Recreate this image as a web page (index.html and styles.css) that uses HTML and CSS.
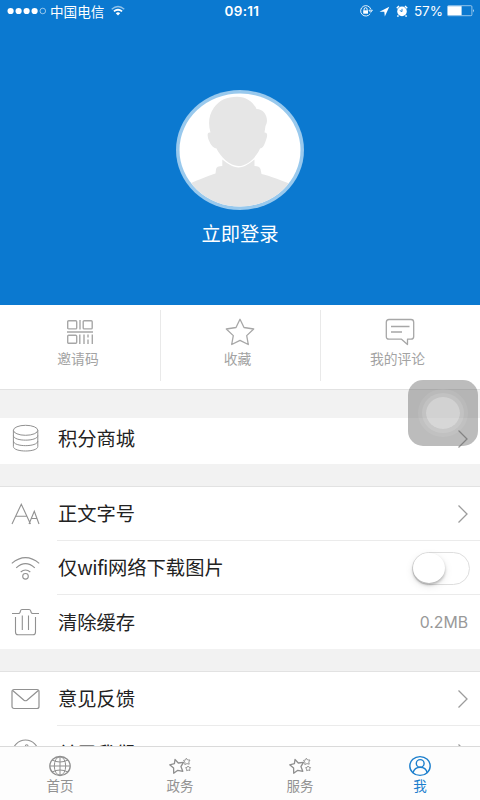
FILE: index.html
```html
<!DOCTYPE html>
<html lang="zh-CN">
<head>
<meta charset="utf-8">
<title>我</title>
<link rel="stylesheet" href="styles.css">
</head>
<body>
<div class="app">
  <header class="hero">
    <div class="status">
      <div class="status-left">
        <svg width="40" height="10" viewBox="0 0 40 10"><g fill="#fff"><circle cx="3.6" cy="5" r="3.1"/><circle cx="11.6" cy="5" r="3.1"/><circle cx="19.6" cy="5" r="3.1"/><circle cx="27.6" cy="5" r="3.1"/></g><circle cx="35.8" cy="5" r="2.8" fill="none" stroke="#fff" stroke-width=".7" opacity=".8"/></svg>
        <span class="carrier">中国电信</span>
        <svg class="signal" width="14" height="12" viewBox="0 0 14 12" fill="none" stroke="#fff"><path d="M.7 4.2Q7-1.2 13.3 4.2" stroke-width="1.3" opacity=".55"/><path d="M2.9 6.4Q7 3.1 11.1 6.4" stroke-width="1.8"/><path d="M4.8 8.3Q7 6.4 9.2 8.3L7 10.6Z" fill="#fff" stroke="none"/></svg>
      </div>
      <div class="clock">09:11</div>
      <div class="status-right">
        <svg width="14" height="12" viewBox="0 0 14 12" fill="none" stroke="#fff"><path d="M11.8 4.2A5.2 5.2 0 1 0 11.2 8.7M9.900 5.200h3.500L11.700 7.300Z" stroke-width=".9"/><path d="M5.100 5.500V4.200a1.500 1.500 0 0 1 3 0v1.300"/><rect x="4.200" y="5.300" width="4.800" height="3.400" fill="#fff" stroke="none"/></svg>
        <svg width="11" height="11" viewBox="0 0 11 11"><path d="M.5 5.700 10.300.7 5.800 10.400 5.300 5.800Z" fill="#fff"/></svg>
        <svg width="12" height="12" viewBox="0 0 12 12"><circle cx="6" cy="6.400" r="4.800" fill="#fff"/><path d="M.8 3.200 3 1M11.200 3.200 9 1M2.500 10.500 1.400 11.600M9.500 10.500l1.100 1.100" stroke="#fff" stroke-width="1.500"/><path d="M6 3.800v2.800L3.800 5.500" fill="none" stroke="#0b79d0" stroke-width=".9"/></svg>
        <span class="percent">57%</span>
        <svg width="28" height="12" viewBox="0 0 28 12"><rect x=".5" y=".7" width="24.400" height="10" rx="1" fill="none" stroke="#fff" stroke-width=".8" opacity=".7"/><rect x="1" y="1.200" width="13.600" height="9" fill="#fff"/><path d="M26 4q1.500 1.700 0 3.400Z" fill="#fff"/></svg>
      </div>
    </div>
    <svg class="avatar" width="128" height="120" viewBox="0 0 128 120">
      <defs><clipPath id="face"><ellipse cx="64" cy="60" rx="60.500" ry="56.500"/></clipPath></defs>
      <ellipse cx="64" cy="60" rx="64" ry="60" fill="#99c9ed"/>
      <ellipse cx="64" cy="60" rx="60.500" ry="56.500" fill="#fff"/>
      <g clip-path="url(#face)" fill="#e6e6e6">
        <path d="M46.300 69.500V76q-5.800 0-6.300 3.300L39.500 83.500Q28 87 4 98V120H124V98Q97 86.500 85.500 84L84.500 79Q83.500 76 78.500 76V69.500Q69 77.500 62.500 77.500T46.300 69.500Z"/>
        <path d="M61 6.700C70 6.700 77.500 12 80.500 19C89 19 93.500 29 89.500 36L88.500 42.500C92 42.500 91.500 46 90 50C88.500 55 87 58 84 58.500C80.500 67 71.500 76 62.500 76C54 76 44.500 67 40.500 58.500C36 58 34 53 32.300 49C31 44 31.500 42 34.500 42.500C32 34 32.500 25 38 17.500C43.500 10 51 6.700 61 6.700Z"/>
      </g>
    </svg>
    <div class="login">立即登录</div>
  </header>

  <nav class="quick">
    <div class="quick-item">
      <svg width="28" height="26" viewBox="0 0 28 26" fill="none" stroke="#a7a7a7" stroke-width="1.400"><rect x="1.700" y="1.700" width="9" height="8.200" rx="1"/><rect x="17.200" y="1.700" width="9" height="8.200" rx="1"/><rect x="1.700" y="16.200" width="9" height="8" rx="1"/><path d="M14 1v9.500M1 13h26M13.800 15.500V25M18 15.500V25M22 15.500v3M22 20.500V25M26.300 15.500V25"/></svg>
      <span>邀请码</span>
    </div>
    <div class="quick-item">
      <svg width="30" height="28" viewBox="0 0 30 28" fill="none" stroke="#a7a7a7" stroke-width="1.300" stroke-linejoin="round"><path d="M15 1.300 19 9.500 28.700 11 21.700 17.600 23.300 26.500 15 22.300 6.700 26.500 8.300 17.600 1.300 11 11 9.500Z"/></svg>
      <span>收藏</span>
    </div>
    <div class="quick-item">
      <svg width="30" height="28" viewBox="0 0 30 28" fill="none" stroke="#a7a7a7" stroke-width="1.300" stroke-linejoin="round"><path d="M4 1.500H26Q28.700 1.500 28.700 4.200V18.500Q28.700 21.200 26 21.200H22.500V26.500L16.500 21.200H4Q1.300 21.200 1.300 18.500V4.200Q1.300 1.500 4 1.500ZM6 8.500H24.500M6 14H17"/></svg>
      <span>我的评论</span>
    </div>
  </nav>

  <main class="list">
    <section class="group group-shop">
      <div class="row">
        <svg class="icon" width="30" height="30" viewBox="0 0 30 30" fill="none" stroke="#919191" stroke-width="1"><ellipse cx="15.600" cy="7.300" rx="12.200" ry="5"/><path d="M3.400 7.300V23.500C3.400 29.500 27.800 29.500 27.800 23.500V7.300M3.400 12.500C3.400 18.700 27.800 18.700 27.800 12.500M3.400 18C3.400 24.200 27.800 24.200 27.800 18"/></svg>
        <div class="row-body"><span class="label">积分商城</span><svg class="chevron" width="12" height="20" viewBox="0 0 12 20"><path d="M1.500 1.500 10 10 1.500 18.500"/></svg></div>
      </div>
    </section>

    <section class="group">
      <div class="row">
        <svg class="icon" width="30" height="30" viewBox="0 0 30 30" fill="none" stroke="#919191" stroke-width="1.100"><path d="M2 25 11.300 5.200 20.500 25M5.800 17.200H16.800M19 25 24.300 12.300 29 25M21.300 19.500H27"/></svg>
        <div class="row-body"><span class="label">正文字号</span><svg class="chevron" width="12" height="20" viewBox="0 0 12 20"><path d="M1.500 1.500 10 10 1.500 18.500"/></svg></div>
      </div>
      <div class="row">
        <svg class="icon" width="30" height="30" viewBox="0 0 30 30" fill="none" stroke="#919191" stroke-width="1.100"><path d="M1.800 10.300Q15.500-1 29.200 10.300M6.200 14.800Q15.500 6.300 24.800 14.800M10.700 19Q15.500 15 20.300 19"/><circle cx="15.500" cy="23.300" r="2.800"/></svg>
        <div class="row-body"><span class="label">仅<span class="latin">wifi</span>网络下载图片</span><div class="switch"><i></i></div></div>
      </div>
      <div class="row">
        <svg class="icon" width="30" height="30" viewBox="0 0 30 30" fill="none" stroke="#919191" stroke-width="1.100" stroke-linejoin="round"><path d="M2 6.500H8.500Q10 6.500 10.500 3.800 10.800 2.500 12 2.500H19Q20.300 2.500 20.700 3.800 21.200 6.500 22.700 6.500H29M5.500 10V25Q5.500 27.800 8 27.800H23Q25.500 27.800 25.500 25V10M12.300 8.500V23M18.500 8.500V23"/></svg>
        <div class="row-body"><span class="label">清除缓存</span><span class="value">0.2MB</span></div>
      </div>
    </section>

    <section class="group">
      <div class="row">
        <svg class="icon" width="30" height="30" viewBox="0 0 30 30" fill="none" stroke="#919191" stroke-width="1.200"><rect x="2" y="5.500" width="27" height="19" rx="2"/><path d="M2.700 6.500 14 16.200Q15.500 17.300 17 16.200L28.300 6.500"/></svg>
        <div class="row-body"><span class="label">意见反馈</span><svg class="chevron" width="12" height="20" viewBox="0 0 12 20"><path d="M1.500 1.500 10 10 1.500 18.500"/></svg></div>
      </div>
      <div class="row">
        <svg class="icon" width="30" height="30" viewBox="0 0 30 30" fill="none" stroke="#919191" stroke-width="1.100"><circle cx="15.500" cy="15" r="13"/><circle cx="16.700" cy="8" r="1.300"/><path d="M13 13h3l-2 9h3"/></svg>
        <div class="row-body"><span class="label">关于我们</span><svg class="chevron" width="12" height="20" viewBox="0 0 12 20"><path d="M1.500 1.500 10 10 1.500 18.500"/></svg></div>
      </div>
    </section>
  </main>

  <footer class="tabs">
    <div class="tab">
      <svg width="24" height="22" viewBox="0 0 24 22" fill="none" stroke="#8f8f8f" stroke-width="1"><ellipse cx="12" cy="11" rx="10.200" ry="9.500" stroke-width="1.300"/><ellipse cx="12" cy="11" rx="5.700" ry="9.300"/><path d="M12 1.500V20.500M2 11H22M4 5Q12 9 20 5M4 17Q12 13 20 17"/></svg>
      <span>首页</span>
    </div>
    <div class="tab">
      <svg width="24" height="22" viewBox="0 0 24 22" fill="none" stroke="#8f8f8f" stroke-width="1.300" stroke-linejoin="round"><path d="M7 4.500 10.300 8 15.500 7.300 12.900 11.600 14.800 16.300 9.800 15.300 5.700 18.200 5.600 13.100 1.700 9.800 6.400 8.700Z"/><path d="M18.300 3.200 19.700 5 22 5 20.800 7 21.200 9.200 19 8.600 16.800 9.600 16.900 7.200 15.500 5.400 17.600 5ZM20 11l1 1.300 1.600.2-.9 1.400.1 1.700-1.600-.5-1.600.6V14l-1-1.300 1.600-.4Z" stroke-width=".9"/></svg>
      <span>政务</span>
    </div>
    <div class="tab">
      <svg width="24" height="22" viewBox="0 0 24 22" fill="none" stroke="#8f8f8f" stroke-width="1.300" stroke-linejoin="round"><path d="M7 4.500 10.300 8 15.500 7.300 12.900 11.600 14.800 16.300 9.800 15.300 5.700 18.200 5.600 13.100 1.700 9.800 6.400 8.700Z"/><path d="M18.300 3.200 19.700 5 22 5 20.800 7 21.200 9.200 19 8.600 16.800 9.600 16.900 7.200 15.500 5.400 17.600 5ZM20 11l1 1.300 1.600.2-.9 1.400.1 1.700-1.600-.5-1.600.6V14l-1-1.300 1.600-.4Z" stroke-width=".9"/></svg>
      <span>服务</span>
    </div>
    <div class="tab active">
      <svg width="24" height="22" viewBox="0 0 24 22" fill="none" stroke="#1c7fcd" stroke-width="1.400"><ellipse cx="12" cy="11" rx="10.200" ry="9.400"/><ellipse cx="12.200" cy="8.400" rx="3.900" ry="3.800"/><path d="M5 17.800Q6.500 12.200 12.200 12.200T19.200 17.800"/></svg>
      <span>我</span>
    </div>
  </footer>
  <div class="assist"><i></i></div>
</div>
</body>
</html>
```
FILE: styles.css
```css
* { box-sizing: border-box; }
body { margin: 0; }
svg { display: block; flex: none; }

.app {
  position: relative;
  width: 480px;
  height: 800px;
  overflow: hidden;
  display: flex;
  flex-direction: column;
  background: #fff;
  font-family: "Noto Sans CJK SC", sans-serif;
}

.hero {
  flex: none;
  height: 305px;
  background: #0b79d0;
  color: #fff;
  display: flex;
  flex-direction: column;
  align-items: center;
}

.status {
  width: 100%;
  height: 22px;
  padding: 0 5px 0 7px;
  display: grid;
  grid-template-columns: 1fr auto 1fr;
  align-items: center;
  font-size: 13.6px;
  line-height: 22px;
}
.status-left, .status-right { display: flex; align-items: center; }
.status-right { justify-content: flex-end; gap: 6px; }
.carrier { margin: -1px 7px 0 3px; }
.clock { font: 600 13.5px/22px Inter, sans-serif; letter-spacing: .3px; padding-left: 2px; }
.percent { font: 13.5px/22px Inter, sans-serif; margin-right: -2px; }

.avatar { margin-top: 68px; }
.login { margin-top: 9px; font-size: 19.3px; line-height: 28px; }

.quick {
  flex: none;
  height: 85px;
  padding-top: 5px;
  border-bottom: 1px solid #e2e2e2;
  display: grid;
  grid-template-columns: repeat(3, 1fr);
}
.quick-item {
  height: 71px;
  padding-top: 8px;
  display: flex;
  flex-direction: column;
  align-items: center;
  font-size: 13.8px;
  line-height: 20px;
  color: #a3a3a3;
}
.quick-item + .quick-item { border-left: 1px solid #e9e9e9; padding-right: 2px; }
.quick-item svg { height: 28px; }
.quick-item span { margin: 2px 4px 0 0; }

.list {
  flex: 1;
  min-height: 0;
  overflow: hidden;
  background: #f2f2f2;
}
.group {
  margin-top: 22px;
  border-top: 1px solid #e2e2e2;
  background: #fff;
}
.group-shop { margin-top: 28px; border-top: 0; }
.group-shop .row { height: 46px; }
.group-shop .row-body { padding-bottom: 5px; }
.group-shop .icon { margin-top: -6px; }

.row {
  height: 54px;
  padding-left: 10px;
  display: flex;
  align-items: center;
}
.icon { margin-right: 17px; }
.row-body {
  flex: 1;
  height: 100%;
  padding: 0 11px 0 1px;
  display: flex;
  align-items: center;
  justify-content: space-between;
  border-bottom: 1px solid #ebebeb;
  font-size: 19.3px;
  line-height: 28px;
  color: #222;
}
.row:last-child .row-body { border-bottom: 0; }
.label { margin-top: -1px; }
.latin { letter-spacing: -.4px; }
.chevron { fill: none; stroke: #9c9c9c; stroke-width: 1.3; }
.value { font: 15.8px Inter, sans-serif; color: #999; margin-right: 1px; }

.switch {
  width: 58px;
  height: 33px;
  margin: 2px -1px 0 0;
  border: 1.5px solid #dedede;
  border-radius: 17px;
}
.switch i {
  display: block;
  width: 32px;
  height: 30px;
  border-radius: 50%;
  background: #fff;
  box-shadow: 0 2px 3px rgba(0, 0, 0, .25), 0 3px 9px rgba(0, 0, 0, .1);
}

.tabs {
  flex: none;
  height: 54px;
  padding-top: 8px;
  border-top: 1px solid #dadada;
  background: #fdfdfd;
  display: grid;
  grid-template-columns: repeat(4, 1fr);
}
.tab {
  display: flex;
  flex-direction: column;
  align-items: center;
  font-size: 13.5px;
  line-height: 16px;
  color: #929292;
}
.tab.active { color: #1c7fcd; }

.assist {
  position: absolute;
  left: 408px;
  top: 380px;
  width: 70px;
  height: 66px;
  border-radius: 15px;
  background: rgba(100, 100, 100, .43);
  display: grid;
  place-items: center;
}
.assist i {
  width: 34px;
  height: 32px;
  border-radius: 50%;
  background: rgba(255, 255, 255, .4);
  box-shadow: 0 0 0 4px rgba(255, 255, 255, .12), 0 0 0 8px rgba(255, 255, 255, .08);
}
```
